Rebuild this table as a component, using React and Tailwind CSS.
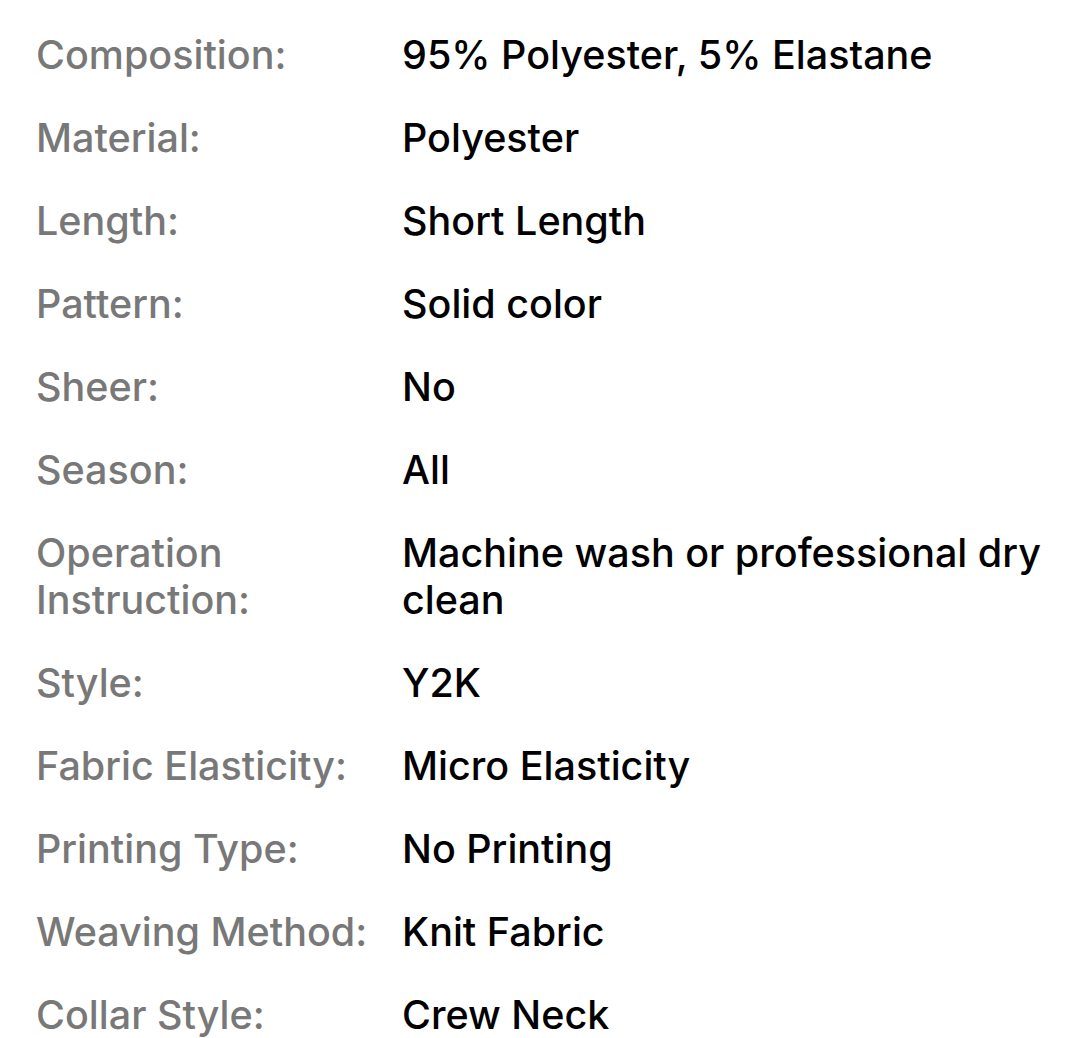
import React from "react";

const rows = [
  ["Composition:", "95% Polyester, 5% Elastane"],
  ["Material:", "Polyester"],
  ["Length:", "Short Length"],
  ["Pattern:", "Solid color"],
  ["Sheer:", "No"],
  ["Season:", "All"],
  ["Operation Instruction:", "Machine wash or professional dry clean"],
  ["Style:", "Y2K"],
  ["Fabric Elasticity:", "Micro Elasticity"],
  ["Printing Type:", "No Printing"],
  ["Weaving Method:", "Knit Fabric"],
  ["Collar Style:", "Crew Neck"],
];

export default function App() {
  return (
    <div
      className="w-[1076px] h-[1038px] bg-white overflow-hidden pt-[14px] pl-[36px] pr-[30px]"
      style={{ fontFamily: "Inter, 'Noto Sans', sans-serif" }}
    >
      {rows.map(([k, v]) => (
        <div key={k} className="flex py-[18px] text-[39.5px] leading-[47px] font-medium">
          <div className="w-[366px] shrink-0 pr-[20px] text-[#787878]">{k}</div>
          <div className="flex-1 text-black">{v}</div>
        </div>
      ))}
    </div>
  );
}
